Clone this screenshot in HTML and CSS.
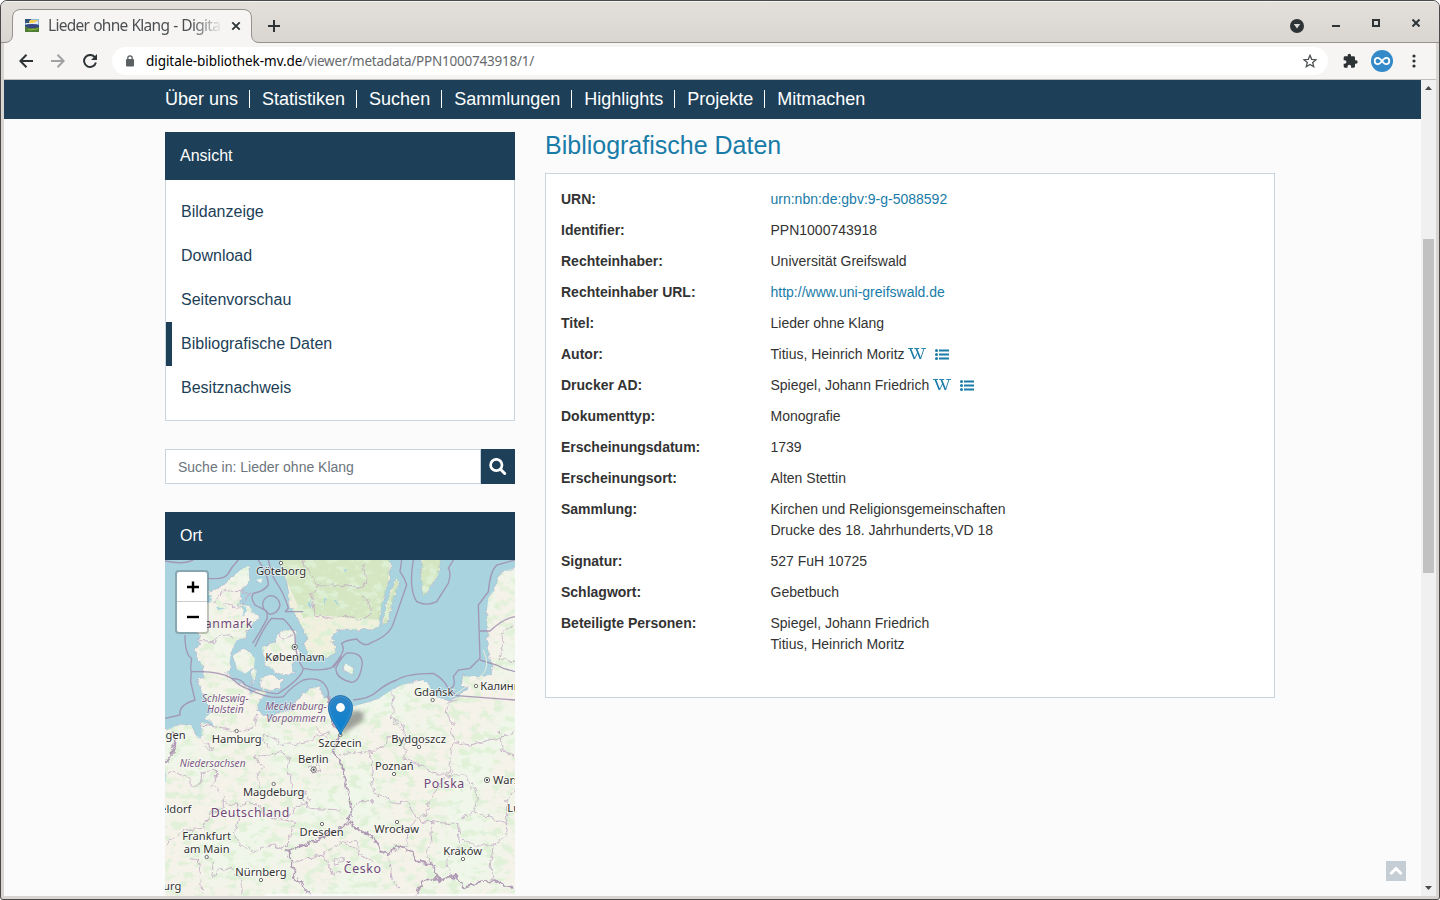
FILE: index.html
```html
<!DOCTYPE html>
<html lang="de">
<head>
<meta charset="utf-8">
<title>Lieder ohne Klang - Digitale Bibliothek</title>
<link rel="stylesheet" href="styles.css">
</head>
<body>
<div class="window">
  <header class="tabstrip">
    <svg class="tab-shape" width="256" height="34" viewBox="0 0 256 34"><path d="M0 33.500C6 33.500 8.500 31 8.500 25V9Q8.500 .5 17 .5H239Q247.500 .5 247.500 9V25C247.500 31 250 33.500 256 33.500V34H0Z" fill="#f6f5f4"/><path d="M0 33.500C6 33.500 8.500 31 8.500 25V9Q8.500 .5 17 .5H239Q247.500 .5 247.500 9V25C247.500 31 250 33.500 256 33.500" fill="none" stroke="#95918d"/></svg>
    <div class="tab">
      <svg class="favicon" width="14" height="13" viewBox="0 0 14 13"><path fill="#8eb8dc" d="M0 0h14v13H0z"/><path fill="#335579" d="M0 0h6v2H4v2H0z"/><path fill="#f4cf50" d="M5 1h8l-3 3H4z"/><path fill="#e5edf4" d="M1 4h7l5-2v3H1z"/><path fill="#384583" d="M0 6q7-2 14 0v3H0z"/><path fill="#4e7d35" d="M0 7q5 4 14 1v5H0z"/><path fill="#8bb63a" d="M3 10q5 1 10-1v1q-5 2-10 1z"/></svg>
      <span class="tab-title">Lieder ohne Klang - Digita</span>
      <svg class="tab-close" width="10" height="10" viewBox="0 0 10 10"><path d="M1.300 1.300l7.400 7.400m0-7.400L1.300 8.700" stroke="#2e3436" stroke-width="1.900"/></svg>
    </div>
    <svg class="new-tab" width="12" height="12" viewBox="0 0 12 12"><path d="M6 0v12M0 6h12" stroke="#2e3436" stroke-width="2"/></svg>
    <div class="window-buttons">
      <svg width="14" height="14" viewBox="0 0 14 14"><circle cx="7" cy="7" r="7" fill="#2e3436"/><path d="M3.800 5h6.400L7 9.500z" fill="#dedbd7"/></svg>
      <svg width="8" height="8" viewBox="0 0 8 8"><path d="M0 7h8" stroke="#2e3436" stroke-width="2"/></svg>
      <svg width="8" height="8" viewBox="0 0 8 8"><path d="M1 1h6v6H1z" fill="none" stroke="#2e3436" stroke-width="2"/></svg>
      <svg width="8" height="8" viewBox="0 0 8 8"><path d="M.5 .5l7 7m0-7l-7 7" stroke="#2e3436" stroke-width="2"/></svg>
    </div>
  </header>
  <div class="toolbar">
    <div class="nav-buttons">
      <svg width="14" height="14" viewBox="0 0 14 14"><path d="M14 7H1.500M7.500 .8L1.300 7l6.200 6.200" fill="none" stroke="#2e3436" stroke-width="2"/></svg>
      <svg width="14" height="14" viewBox="0 0 14 14"><path d="M0 7h12.500M6.500 .8L12.700 7l-6.200 6.200" fill="none" stroke="#a0a1a1" stroke-width="2"/></svg>
      <svg width="14" height="14" viewBox="0 0 14 14"><path d="M11.800 3.200A6 6 0 1 0 12.900 8.500" fill="none" stroke="#2e3436" stroke-width="2"/><path d="M14 0v6H8z" fill="#2e3436"/></svg>
    </div>
    <div class="omnibox">
      <svg width="8" height="12" viewBox="0 0 8 12"><path d="M1.800 5V3a2.200 2.200 0 0 1 4.400 0v2" fill="none" stroke="#5b6063" stroke-width="1.300"/><rect y="4" width="8" height="7.500" rx="1" fill="#5b6063"/></svg>
      <span class="url"><b>digitale-bibliothek-mv.de</b>/viewer/metadata/PPN1000743918/1/</span>
      <svg class="star" width="14" height="14" viewBox="0 0 14 14"><path d="M7 1.300l1.700 4 4.300.4-3.300 2.800 1 4.200L7 10.500l-3.700 2.200 1-4.200L1 5.700l4.300-.4z" fill="none" stroke="#4b5052" stroke-width="1.300"/></svg>
    </div>
    <div class="toolbar-end">
      <svg width="16" height="16" viewBox="0 0 24 24"><path fill="#2e3436" d="M21 11h-1.500V7a2 2 0 0 0-2-2h-4V3.500a2.500 2.500 0 0 0-5 0V5h-4a2 2 0 0 0-2 2v3.800H4a2.700 2.700 0 0 1 0 5.400H2.500V20a2 2 0 0 0 2 2h3.800v-1.500a2.700 2.700 0 0 1 5.400 0V22h3.800a2 2 0 0 0 2-2v-4H21a2.500 2.500 0 0 0 0-5z"/></svg>
      <svg width="22" height="22" viewBox="0 0 22 22"><circle cx="11" cy="11" r="11" fill="#3489c9"/><path d="M11 11C9 8.400 8.200 7.800 6.900 7.800a3.200 3.200 0 0 0 0 6.400C8.200 14.200 9 13.600 11 11s2.800-3.200 4.100-3.200a3.200 3.200 0 0 1 0 6.400C13.800 14.200 13 13.600 11 11z" fill="none" stroke="#fff" stroke-width="1.800"/></svg>
      <svg width="4" height="14" viewBox="0 0 4 14"><g fill="#2e3436"><circle cx="2" cy="2" r="1.600"/><circle cx="2" cy="7" r="1.600"/><circle cx="2" cy="12" r="1.600"/></g></svg>
    </div>
  </div>
  <div class="viewport">
    <div class="page">
      <nav class="mainnav"><a>Über uns</a><a>Statistiken</a><a>Suchen</a><a>Sammlungen</a><a>Highlights</a><a>Projekte</a><a>Mitmachen</a></nav>
      <div class="columns">
        <aside class="sidebar">
          <section>
            <h3 class="widget-title">Ansicht</h3>
            <ul class="views"><li>Bildanzeige</li><li>Download</li><li>Seitenvorschau</li><li class="active">Bibliografische Daten</li><li>Besitznachweis</li></ul>
          </section>
          <div class="search">
            <input class="search-input" placeholder="Suche in: Lieder ohne Klang">
            <button class="search-button"><svg width="18" height="18" viewBox="0 0 18 18"><circle cx="7.300" cy="7" r="5.700" fill="none" stroke="#fff" stroke-width="2.700"/><path d="M11.500 11.300l4.200 4.200" stroke="#fff" stroke-width="3" stroke-linecap="round"/></svg></button>
          </div>
          <section>
            <h3 class="widget-title">Ort</h3>
            <div class="map">
              <svg class="map-canvas" width="350" height="336" viewBox="15 15 1050 1008">
                <defs>
                  <filter id="rough" filterUnits="userSpaceOnUse" x="0" y="0" width="1100" height="1040"><feTurbulence type="fractalNoise" baseFrequency=".05" numOctaves="3" seed="4"/><feDisplacementMap in="SourceGraphic" scale="22" xChannelSelector="R" yChannelSelector="G"/></filter>
                  <filter id="forest" filterUnits="userSpaceOnUse" x="0" y="0" width="1100" height="1040"><feTurbulence type="fractalNoise" baseFrequency=".03 .045" numOctaves="5" seed="12"/><feColorMatrix values="0 0 0 0 .72  0 0 0 0 .87  0 0 0 0 .66  6 0 0 0 -3.050"/></filter>
                  <filter id="haze" filterUnits="userSpaceOnUse" x="0" y="0" width="1100" height="1040"><feTurbulence type="fractalNoise" baseFrequency=".006" numOctaves="3" seed="7"/><feColorMatrix values="0 0 0 0 .87  0 0 0 0 .93  0 0 0 0 .82  0 4 0 0 -1.700"/></filter>
                  <clipPath id="land"><use href="#coast"/></clipPath>
                  <clipPath id="sweden"><use href="#north"/></clipPath>
                </defs>
                <path fill="#a9d3de" d="M0 0h1100v1040H0z"/>
                <g filter="url(#rough)">
                  <path id="coast" fill="#f4f2e9" stroke="#a6a7c4" stroke-width="1.500" d="M265 33L268 75 245 105 238 148 268 152 293 187 270 215 253 248 230 255 212 290 210 320 203 362 240 385 266 397 268 420 312 402 320 415 298 440 290 465 330 488 360 470 400 460 410 430 440 410 465 395 490 402 492 425 520 450 575 455 650 435 685 412 730 388 785 375 808 390 820 422 870 437 900 420 925 398 910 390 908 362 960 366 992 360 1000 335 985 290 984 250 980 170 985 130 1010 90 1015 65 1035 45 1100 32V1060H-20V545L15 525 60 508 95 512 105 540 125 548 125 500 150 512 165 512 135 490 155 470 125 410 115 375 130 370 125 330 105 290 120 250 115 200 122 150 120 115 150 110 200 85 238 48Z
                  M220 300L255 283 285 310 282 340 255 357 230 342ZM305 275L350 260 350 240 375 225 410 230 405 270 415 290 395 330 400 350 370 362 340 345 315 330ZM300 370L335 360 370 375 360 403 330 407 300 392ZM288 75l20-5-5 15ZM555 325L580 340 577 358 553 345ZM275 360l8-20 8 8-12 42ZM192 345l25 25-10 5Z"/>
                  <path id="north" fill="#f1f0df" stroke="#a6a7c4" stroke-width="1.500" d="M350-10L380 80 390 140 400 170 440 240 430 275 455 300 500 310 530 290 520 262 515 243 540 222 635 225 655 215 665 150 685 80 690-10ZM710 70L685 130 668 210 680 205 700 130 717 85ZM790-10L783 60 790 125 810 95 835 60 845-10Z"/>
                </g>
                <g clip-path="url(#land)"><rect filter="url(#haze)" width="1100" height="1040"/><rect filter="url(#forest)" width="1100" height="1040" opacity=".8"/></g>
                <g clip-path="url(#sweden)"><path fill="#c6e2b2" opacity=".65" d="M350 0H870V400H660V195L460 180 430 190 390 100Z"/><rect filter="url(#forest)" width="1100" height="400"/></g>
                <g fill="#a9d3de" filter="url(#rough)"><path d="M450 135l8 10-4 12-8-10ZM485 130l12 5-5 12ZM525 135l8 4-2 14ZM550 40l8 4-2 10ZM135 110l20 8-5 30-12-8ZM245 150l14 6-8 30ZM170 160l30-4-18 10Z"/></g>
                <g filter="url(#rough)" fill="none" stroke="#c3abc5" stroke-width="2.500">
                  <path d="M160 145L180 120 190 105 245 107 270 118 245 155 220 158 190 148M110 255L160 260 190 235 220 250M350 235L375 250 400 240M425 15L455 60 475 90 455 115 465 180 520 190M475 90L540 90 570 95 595 100 620 85 610 30M530 190L550 180 600 195 635 175 625 140 600 120M695 410L700 460 690 490 735 510M900 430L860 445 865 490 880 510M700 500L730 525M470 520L500 550"/>
                  <path d="M15 660L35 645 50 655 90 670 90 690 120 690 125 655 165 645 170 675 155 690 190 720 190 760 150 770 130 820 70 825 15 870M190 740L240 755 260 740 290 745 330 790 410 800 395 820 385 860 365 880 325 870 280 890 240 870 225 840 235 790 230 750M300 700L290 660 310 640 285 605 325 600 360 590 385 610 385 650 395 710 440 740 445 760 540 765M330 580L310 560 315 540 370 570 440 560 510 530M395 710L440 715 450 740 410 750 380 790M130 560L160 580 155 590 130 570M125 510L200 520 240 530 280 515 290 480M165 645L170 670M85 910L115 915 120 950 125 1010M140 900L160 920 155 970 180 940 220 945 250 980 245 1020M340 870L370 885M400 925L440 910 470 910 500 890 540 860 590 880M440 910L490 900 520 960 540 955M560 855L590 860 600 900 640 920M690 910L695 970 720 1000M525 910L550 905 545 920 520 925ZM445 640L470 630 485 645 460 655Z"/>
                  <path d="M535 600L630 590 635 630 640 710 670 725 700 745 740 740 770 790 800 780 805 740 830 700 870 640 875 570 885 560 930 570 1065 535M630 590L675 570 690 540 735 560 735 610 800 640 830 660 870 660 875 640M570 765L600 740 640 740 660 720M770 795L860 805 900 810 895 840 930 870 1000 870 1040 840 1040 740 1065 700M900 790L940 770 1040 805M940 770L950 720 930 680 910 660 870 660M895 840L900 870 860 920 880 975M770 795L745 820 740 870 700 885M1000 870L990 940 1005 975M1020 530L1030 590 1065 600M730 510L735 560M885 560L870 520M810 800L815 850 800 910 820 940M1065 210L1025 230 1030 270 1020 310 1065 320"/>
                </g>
                <g fill="none" stroke="#a08caf" stroke-width="4" opacity=".85">
                  <path d="M235 15Q215 35 205 55T145 70M100 15Q70 30 15 18M295 15Q325 60 325 90 310 110 280 115 270 130 285 150L320 168 322 190 300 230 278 265M325 15Q335 60 345 75 375 120 385 160L375 170M330 122Q355 122 360 150 355 175 330 178 307 165 308 145 312 127 330 122M375 170L430 170M75 240Q75 300 95 310 90 345 94 350L92 380 105 435Q55 450 60 480L15 490M94 350L125 350Q180 350 215 370 245 370 255 390 330 420 355 415 425 370 430 340 405 310 405 240 395 215 370 192L335 190Q315 210 285 275M215 370Q240 395 260 400 330 435 370 425 400 390 430 375 490 360 505 410V430M430 340Q485 350 515 338 550 300 550 280L545 265Q560 255 590 252 615 280 635 262 690 240 700 205L740 90Q735 70 720 50L725 15M560 294Q605 290 607 325 600 380 575 382 525 370 528 338 545 305 560 294M520 338L545 305M760 15Q745 100 770 140 800 155 830 140L865 85Q875 50 865 40L880 15M580 435Q630 430 650 410 680 385 710 375 740 355 820 355 850 370 865 400 890 400 880 365L895 345 930 340 960 310 955 150 985 110Q990 50 1010 30L1065 15M960 228L990 228Q1030 190 1065 185M960 315L1010 330 1030 340 1065 350M865 400L890 422 1065 435"/>
                </g>
                <g filter="url(#rough)" fill="none" stroke="#af99b4" stroke-width="5">
                  <path d="M505 425L515 500 540 540 520 590 545 630 560 700 575 765 560 810 480 850 430 870 380 890 400 925 400 960 450 1020M575 810L640 850 660 885 690 900 705 870 755 890 780 920 820 930 840 980 885 960 910 1000 960 980 1000 975 1060 1000M840 970L790 975 770 1020M40 530Q50 570 35 600L15 630M560 815L575 800 590 820"/>
                </g>
                <path d="M870 430L960 365Q995 340 970 285" fill="none" stroke="#e8edda" stroke-width="3"/>
                <g class="places">
                  <text x="363" y="60">Göteborg</text><text x="405" y="318">København</text><text x="821" y="423">Gdańsk</text><text x="961" y="404" class="start">Калининград</text>
                  <text x="77" y="552" class="end">Bremerhagen</text><text x="230" y="563">Hamburg</text><text x="540" y="577">Szczecin</text><text x="460" y="625">Berlin</text><text x="341" y="724">Magdeburg</text><text x="94" y="774" class="end">Düsseldorf</text><text x="140" y="854">Frankfurt</text><text x="140" y="893">am Main</text><text x="303" y="964">Nürnberg</text><text x="64" y="1004" class="end">Strasbourg</text><text x="485" y="842">Dresden</text><text x="776" y="563">Bydgoszcz</text><text x="703" y="644">Poznań</text><text x="999" y="686" class="start">Warszawa</text><text x="710" y="833">Wrocław</text><text x="908" y="899">Kraków</text><text x="1042" y="772" class="start">Lublin</text>
                </g>
                <g class="countries"><text x="279" y="219" class="end">Danmark</text><text x="271" y="786">Deutschland</text><text x="853" y="700">Polska</text><text x="608" y="953">Česko</text><text x="20" y="681" class="end">d</text></g>
                <g class="regions"><text x="196" y="441">Schleswig-</text><text x="196" y="475">Holstein</text><text x="408" y="466">Mecklenburg-</text><text x="408" y="500">Vorpommern</text><text x="158" y="636">Niedersachsen</text></g>
                <g fill="#fff" stroke="#555" stroke-width="2.500"><circle cx="363" cy="24" r="5"/><circle cx="818" cy="435" r="5"/><circle cx="948" cy="393" r="5"/><circle cx="230" cy="528" r="5"/><circle cx="341" cy="687" r="5"/><circle cx="486" cy="807" r="5"/><circle cx="140" cy="906" r="5"/><circle cx="303" cy="975" r="5"/><circle cx="777" cy="576" r="5"/><circle cx="702" cy="657" r="5"/><circle cx="711" cy="801" r="5"/><circle cx="909" cy="912" r="5"/><circle cx="541" cy="540" r="5"/><circle cx="404" cy="276" r="8"/><circle cx="461" cy="644" r="8"/><circle cx="981" cy="675" r="8"/></g>
                <g fill="#444"><circle cx="404" cy="276" r="3.500"/><circle cx="461" cy="644" r="3.500"/><circle cx="981" cy="675" r="3.500"/></g>
                <path d="M315 1016h750v8H315z" fill="#fff" opacity=".7"/>
              </svg>
              <svg class="marker" width="45" height="41" viewBox="0 0 45 41"><defs><linearGradient id="pin" x2="0" y2="1"><stop stop-color="#3084c4"/><stop offset="1" stop-color="#027fd0"/></linearGradient><filter id="soft" x="-50%" y="-50%" width="200%" height="200%"><feGaussianBlur stdDeviation="2"/></filter></defs><path d="M13 40L17 25Q24 13 32 16T32 28Z" fill="#222" opacity=".4" filter="url(#soft)"/><path d="M12.500 40C10.500 33 .5 24 .5 12.500a12 12 0 0 1 24 0C24.500 24 14.500 33 12.500 40Z" fill="url(#pin)" stroke="#2a76ad"/><path d="M12.500 37C9 29 1.700 22 1.700 12.500a10.800 10.800 0 0 1 21.600 0C23.300 22 16 29 12.500 37Z" fill="none" stroke="#4a98d0" stroke-width=".6"/><circle cx="12.500" cy="12.500" r="4.400" fill="#fff"/></svg>
              <div class="zoom"><span><svg width="12" height="12" viewBox="0 0 12 12"><path d="M6 .5v11M0 6h12" stroke="#000" stroke-width="2.400"/></svg></span><span><svg width="12" height="12" viewBox="0 0 12 12"><path d="M0 6h12" stroke="#000" stroke-width="2.400"/></svg></span></div>
            </div>
          </section>
        </aside>
        <main class="content">
          <h1>Bibliografische Daten</h1>
          <dl class="metadata">
            <dt>URN:</dt><dd><a>urn:nbn:de:gbv:9-g-5088592</a></dd>
            <dt>Identifier:</dt><dd>PPN1000743918</dd>
            <dt>Rechteinhaber:</dt><dd>Universität Greifswald</dd>
            <dt>Rechteinhaber URL:</dt><dd><a>http://www.uni-greifswald.de</a></dd>
            <dt>Titel:</dt><dd>Lieder ohne Klang</dd>
            <dt>Autor:</dt><dd>Titius, Heinrich Moritz <svg class="wiki" width="18" height="12" viewBox="0 0 18 12"><use href="#wiki-mark"/></svg><svg class="list" width="14" height="11" viewBox="0 0 14 11"><use href="#list-mark"/></svg></dd>
            <dt>Drucker AD:</dt><dd>Spiegel, Johann Friedrich <svg class="wiki" width="18" height="12" viewBox="0 0 18 12"><use href="#wiki-mark"/></svg><svg class="list" width="14" height="11" viewBox="0 0 14 11"><use href="#list-mark"/></svg></dd>
            <dt>Dokumenttyp:</dt><dd>Monografie</dd>
            <dt>Erscheinungsdatum:</dt><dd>1739</dd>
            <dt>Erscheinungsort:</dt><dd>Alten Stettin</dd>
            <dt>Sammlung:</dt><dd>Kirchen und Religionsgemeinschaften<br>Drucke des 18. Jahrhunderts,VD 18</dd>
            <dt>Signatur:</dt><dd>527 FuH 10725</dd>
            <dt>Schlagwort:</dt><dd>Gebetbuch</dd>
            <dt>Beteiligte Personen:</dt><dd>Spiegel, Johann Friedrich<br>Titius, Heinrich Moritz</dd>
          </dl>
        </main>
      </div>
      <div class="to-top"><svg width="14" height="10" viewBox="0 0 14 10"><path d="M1.500 8L7 2.500 12.500 8" fill="none" stroke="#fff" stroke-width="3"/></svg></div>
    </div>
    <div class="scrollbar"><svg width="7" height="4" viewBox="0 0 7 4"><path d="M0 4L3.500 0 7 4z" fill="#4a4a4a"/></svg><div class="thumb"></div><svg width="7" height="4" viewBox="0 0 7 4"><path d="M0 0h7L3.500 4z" fill="#4a4a4a"/></svg></div>
  </div>
</div>
<svg class="symbols" width="0" height="0">
  <symbol id="wiki-mark" viewBox="0 0 18 12"><g fill="none" stroke="#197ba8"><path d="M0 .5h5M6.200 .5h5M13.300 .5H18" stroke-width=".9"/><path d="M2.300 .5L6.500 11M8.300 .5L12.500 11" stroke-width="1.700"/><path d="M6.500 11L10 3.800M12.500 11L16 .5" stroke-width=".9"/></g></symbol>
  <symbol id="list-mark" viewBox="0 0 14 11"><g fill="#197ba8"><circle cx="1.500" cy="1.500" r="1.500"/><circle cx="1.500" cy="5.500" r="1.500"/><circle cx="1.500" cy="9.500" r="1.500"/><path d="M4 .5h10v2H4zM4 4.500h10v2H4zM4 8.500h10v2H4z"/></g></symbol>
</svg>
</body>
</html>
```
FILE: styles.css
```css
* { box-sizing: border-box; }
body { margin: 0; background: #fff; font-family: "Liberation Sans", Arial, sans-serif; font-size: 14px; color: #333; }
svg { display: block; flex: none; }
.window { width: 1440px; height: 900px; display: flex; flex-direction: column; border: 1px solid #4b4a4a; border-radius: 7px 7px 3px 3px; background: #d9d5d0; overflow: hidden; padding: 0 3px 3px; }
.tabstrip { height: 42px; flex: none; margin: 0 -3px; padding: 0 3px; display: flex; align-items: center; position: relative; background: linear-gradient(#e3dfdb, #d9d5d1); border-top: 1px solid #f5f4f2; border-bottom: 1px solid #95918d; }
.tab-shape { position: absolute; left: 3px; top: 7px; }
.tab { position: relative; width: 248px; height: 33px; padding: 0 11px 0 21px; display: flex; align-items: center; margin-top: 7px; }
.tab-title { width: 175px; margin-left: 9px; overflow: hidden; white-space: nowrap; font: 15.5px/24px "Noto Sans", sans-serif; letter-spacing: -.72px; word-spacing: .6px; color: #4c5052; -webkit-mask-image: linear-gradient(90deg, #000 82%, transparent); mask-image: linear-gradient(90deg, #000 82%, transparent); margin-top: -2px; }
.tab-close { margin-left: 8px; }
.new-tab { margin: 7px 0 0 16px; }
.window-buttons { margin-left: auto; display: flex; align-items: center; gap: 32px; padding-right: 16px; margin-top: 1px; }
.window-buttons svg:first-child { margin: 6px -4px 0 0; }
.toolbar { height: 37px; flex: none; display: flex; align-items: center; background: #f6f5f4; border-bottom: 1px solid #c0bfbd; }
.nav-buttons { display: flex; gap: 18px; margin-left: 15px; width: 93px; }
.omnibox { width: 1216px; height: 28px; display: flex; align-items: center; padding: 0 11px 0 14px; border-radius: 14px; background: #fff; }
.url { margin-left: 12px; font: 13.5px/20px "Noto Sans", sans-serif; letter-spacing: -.22px; color: #666a6c; }
.url b { font-weight: 400; letter-spacing: -.05px; color: #000; }
.star { margin-left: auto; }
.toolbar-end { display: flex; align-items: center; gap: 13px; margin-left: 14px; }
.toolbar-end svg:last-child { margin-left: 6px; }
.viewport { height: 816px; display: flex; }
.page { width: 1417px; height: 816px; overflow: hidden; position: relative; background: #fbfbfb; }
.mainnav { height: 39px; display: flex; align-items: center; padding: 0 0 2px 161px; background: #1d3f58; color: #fff; font-size: 18px; line-height: 18px; }
.mainnav a { padding-right: 11px; margin-right: 12px; border-right: 1px solid #fff; }
.mainnav a:last-child { border: 0; }
.columns { display: flex; gap: 30px; padding: 13px 0 0 161px; }
.sidebar { width: 350px; display: flex; flex-direction: column; gap: 28px; }
.widget-title { margin: 0; height: 48px; padding-left: 15px; background: #1d3f58; color: #fff; font-weight: 400; font-size: 16px; line-height: 48px; }
.views { list-style: none; margin: 0; padding: 10px 0; height: 241px; border: 1px solid #c8d5df; border-top: 0; background: #fff; color: #1d3f58; font-size: 16px; line-height: 44px; }
.views li { height: 44px; padding-left: 15px; }
.views .active { border-left: 6px solid #1d3f58; padding-left: 9px; }
.search { display: flex; height: 35px; }
.search-input { width: 316px; height: 35px; padding: 0 12px; border: 1px solid #c8d5df; border-radius: 0; background: #fff; font: 14px "Liberation Sans", Arial, sans-serif; }
.search-input::placeholder { color: #6c757d; }
.search-button { width: 34px; height: 35px; padding: 0 0 0 8px; border: 0; background: #1d3f58; }
.map { height: 336px; position: relative; overflow: hidden; }
.places text { font: 33.5px "Noto Sans", sans-serif; fill: #333; text-anchor: middle; stroke: #fff; stroke-opacity: .7; stroke-width: 5px; paint-order: stroke; }
.countries text { font: 37px "Noto Sans", sans-serif; letter-spacing: 1.800px; fill: #704776; text-anchor: middle; stroke: #fff; stroke-opacity: .6; stroke-width: 4px; paint-order: stroke; }
.regions text { font: italic 30.5px "Noto Sans", sans-serif; fill: #7d5a84; text-anchor: middle; stroke: #fff; stroke-opacity: .6; stroke-width: 4px; paint-order: stroke; }
.places .start { text-anchor: start; }
.places .end, .countries .end { text-anchor: end; }
.marker { position: absolute; left: 163px; top: 135px; }
.zoom { position: absolute; left: 10px; top: 10px; width: 34px; height: 64px; border: 2px solid rgba(0, 0, 0, .2); background-clip: padding-box; border-radius: 4px; background-color: #fff; }
.zoom span { height: 30px; display: flex; align-items: center; justify-content: center; padding-left: 1px; border-bottom: 1px solid #ccc; }
.zoom span:last-child { border: 0; }
.content { width: 730px; }
.content h1 { margin: -1px 0 14px; height: 28px; color: #197ba8; font-weight: 400; font-size: 25px; line-height: 28px; }
.metadata { margin: 0; height: 525px; padding: 15px; display: grid; grid-template-columns: 209.500px 1fr; align-content: start; row-gap: 10px; border: 1px solid #c8d5df; background: #fff; line-height: 21px; }
.metadata dt { font-weight: 700; }
.metadata dd { margin: 0; }
.metadata a { color: #197ba8; }
.wiki { display: inline-block; vertical-align: -1px; }
.list { display: inline-block; margin-left: 9px; vertical-align: -1px; }
.to-top { position: absolute; right: 15px; bottom: 15px; width: 20px; height: 20px; display: flex; align-items: center; justify-content: center; background: #c5cdd5; }
.scrollbar { width: 15px; height: 816px; padding: 6px 2px 6px; display: flex; flex-direction: column; align-items: center; background: #f0f0f0; }
.thumb { width: 11px; height: 334px; margin: 149px 0 auto; background: #c1c1c1; }
.symbols { position: absolute; }
```
